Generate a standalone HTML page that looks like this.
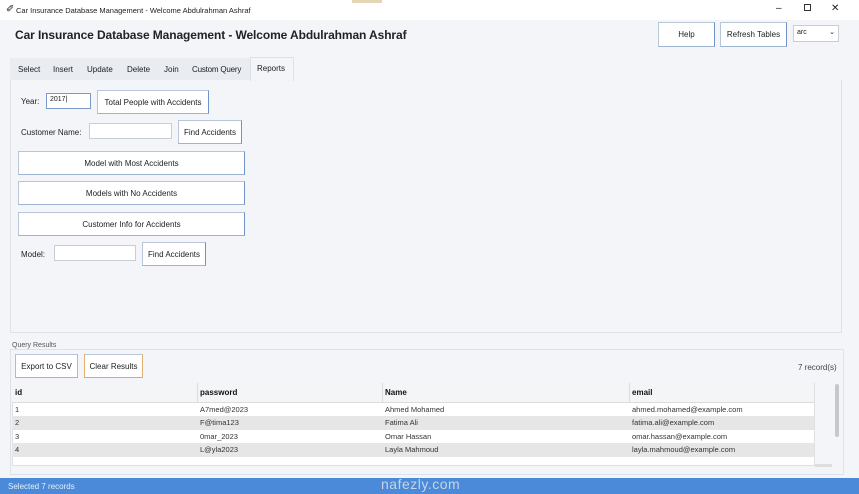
<!DOCTYPE html><html><head><style>
*{margin:0;padding:0;box-sizing:border-box}
body{width:859px;height:494px;overflow:hidden;background:#f3f5f9;font-family:"Liberation Sans",sans-serif;font-size:9px;color:#222;position:relative}
.a{position:absolute}
.btn{position:absolute;background:#fff;border:1px solid #b9c6d8;border-right:1px solid #6f93c6;border-bottom:1px solid #9db3d2;display:flex;align-items:center;justify-content:center;font-size:8px;color:#222}
.inp{position:absolute;background:#fff;border:1px solid #c9ced6}
.row{position:absolute;left:12px;width:802px;height:14px;font-size:7.5px;color:#333}
.row span{position:absolute;top:2px}
.t{position:absolute;top:65px;font-size:8px}
</style></head><body>
<div class="a" style="left:0;top:0;width:859px;height:20px;background:#fff"></div>
<div class="a" style="left:6px;top:4px;font-size:10px">✐</div>
<div class="a" style="left:16px;top:6px;font-size:7.5px">Car Insurance Database Management - Welcome Abdulrahman Ashraf</div>
<div class="a" style="left:352px;top:0;width:30px;height:3px;background:#e6d6b8"></div>
<div class="a" style="left:776px;top:3px;font-size:10px">–</div>
<div class="a" style="left:804px;top:4px;width:7px;height:7px;border:1px solid #333"></div>
<div class="a" style="left:831px;top:3px;font-size:10px">✕</div>
<div class="a" style="left:15px;top:28px;font-size:12px;font-weight:bold;color:#222;letter-spacing:-0.1px">Car Insurance Database Management - Welcome Abdulrahman Ashraf</div>
<div class="btn" style="left:658px;top:22px;width:57px;height:25px">Help</div>
<div class="btn" style="left:720px;top:22px;width:67px;height:25px">Refresh Tables</div>
<div class="inp" style="left:793px;top:25px;width:46px;height:17px;font-size:7px;padding:3px 3px">arc<span style="position:absolute;right:3px;top:2px">⌄</span></div>
<div class="a" style="left:10px;top:58px;width:240px;height:22px;background:#e9ecf1"></div>
<div class="a" style="left:250px;top:57px;width:44px;height:24px;background:#f3f5f9;border:1px solid #dde2ea;border-bottom:none"></div>
<div class="t" style="left:18px">Select</div>
<div class="t" style="left:53px">Insert</div>
<div class="t" style="left:87px">Update</div>
<div class="t" style="left:127px">Delete</div>
<div class="t" style="left:164px">Join</div>
<div class="t" style="left:192px;letter-spacing:-0.2px">Custom Query</div>
<div class="t" style="left:257px;top:64px">Reports</div>
<div class="a" style="left:10px;top:80px;width:832px;height:253px;border:1px solid #dde2ea;border-top:none"></div>
<div class="a" style="left:21px;top:97px;font-size:8px">Year:</div>
<div class="inp" style="left:46px;top:93px;width:45px;height:16px;border-color:#7b9ac9;font-size:7px;padding:2px 3px">2017|</div>
<div class="btn" style="left:97px;top:90px;width:112px;height:24px">Total People with Accidents</div>
<div class="a" style="left:21px;top:128px;font-size:8px">Customer Name:</div>
<div class="inp" style="left:89px;top:123px;width:83px;height:16px"></div>
<div class="btn" style="left:178px;top:120px;width:64px;height:24px">Find Accidents</div>
<div class="btn" style="left:18px;top:151px;width:227px;height:24px">Model with Most Accidents</div>
<div class="btn" style="left:18px;top:181px;width:227px;height:24px">Models with No Accidents</div>
<div class="btn" style="left:18px;top:212px;width:227px;height:24px">Customer Info for Accidents</div>
<div class="a" style="left:21px;top:250px;font-size:8px">Model:</div>
<div class="inp" style="left:54px;top:245px;width:82px;height:16px"></div>
<div class="btn" style="left:142px;top:242px;width:64px;height:24px">Find Accidents</div>
<div class="a" style="left:10px;top:349px;width:834px;height:126px;border:1px solid #dde2ea"></div>
<div class="a" style="left:12px;top:342px;font-size:7px;color:#555;background:#f3f5f9;padding-right:2px">Query Results</div>
<div class="btn" style="left:15px;top:354px;width:63px;height:24px;border-left-color:#9cc8c0;border-right-color:#9cc8c0">Export to CSV</div>
<div class="btn" style="left:84px;top:354px;width:59px;height:24px;border-left-color:#e3b070;border-right-color:#e3b070">Clear Results</div>
<div class="a" style="left:798px;top:363px;font-size:8px;color:#444">7 record(s)</div>
<div class="a" style="left:12px;top:383px;width:803px;height:83px;background:#fff;border:1px solid #e0e0e0"></div>
<div class="row" style="top:383px;height:20px;background:#f4f5f7;border-bottom:1px solid #dcdcdc;font-weight:bold;color:#111;font-size:8px">
<span style="left:3px;top:5px">id</span><span style="left:188px;top:5px">password</span><span style="left:373px;top:5px">Name</span><span style="left:620px;top:5px">email</span>
<i style="position:absolute;left:185px;top:0;height:19px;border-left:1px solid #ddd"></i><i style="position:absolute;left:370px;top:0;height:19px;border-left:1px solid #ddd"></i><i style="position:absolute;left:617px;top:0;height:19px;border-left:1px solid #ddd"></i></div>
<div class="row" style="top:403px"><span style="left:3px">1</span><span style="left:188px">A7med@2023</span><span style="left:373px">Ahmed Mohamed</span><span style="left:620px">ahmed.mohamed@example.com</span></div>
<div class="row" style="top:416px;background:#e6e6e6"><span style="left:3px">2</span><span style="left:188px">F@tima123</span><span style="left:373px">Fatima Ali</span><span style="left:620px">fatima.ali@example.com</span></div>
<div class="row" style="top:430px"><span style="left:3px">3</span><span style="left:188px">0mar_2023</span><span style="left:373px">Omar Hassan</span><span style="left:620px">omar.hassan@example.com</span></div>
<div class="row" style="top:443px;background:#e6e6e6"><span style="left:3px">4</span><span style="left:188px">L@yla2023</span><span style="left:373px">Layla Mahmoud</span><span style="left:620px">layla.mahmoud@example.com</span></div>
<div class="a" style="left:835px;top:384px;width:4px;height:53px;background:#c8c8c8;border-radius:2px"></div>
<div class="a" style="left:815px;top:464px;width:17px;height:3px;background:#ddd"></div>
<div class="a" style="left:0;top:478px;width:859px;height:16px;background:#4a8ad8"></div>
<div class="a" style="left:8px;top:482px;font-size:8px;color:#e8f0fb">Selected 7 records</div>
<div class="a" style="left:381px;top:476px;font-size:14px;color:#c8d4e4;letter-spacing:0.5px">nafezly.com</div>
</body></html>
